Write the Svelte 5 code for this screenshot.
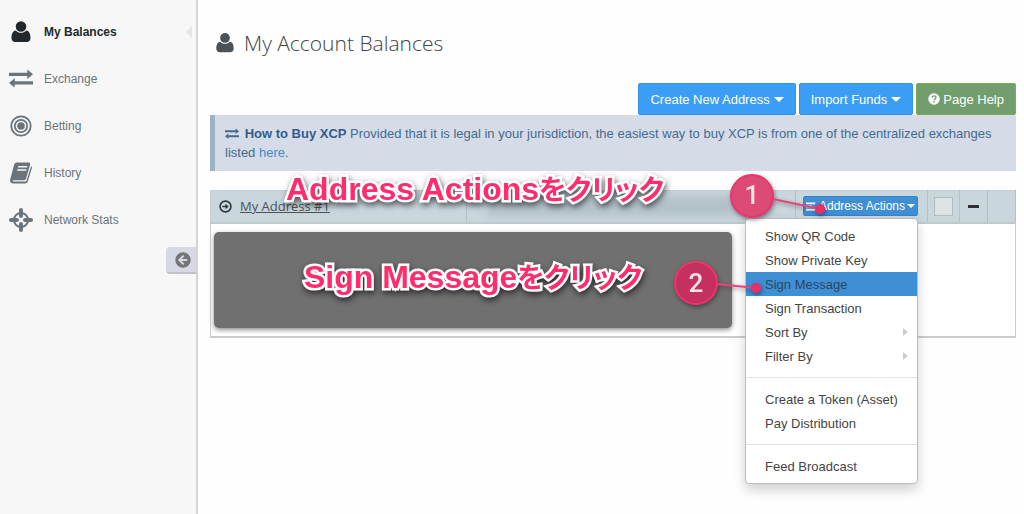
<script lang="ts">
  type NavItem = { label: string; icon: string; active?: boolean };

  const nav: NavItem[] = [
    { label: "My Balances", icon: "user", active: true },
    { label: "Exchange", icon: "exchange" },
    { label: "Betting", icon: "target" },
    { label: "History", icon: "book" },
    { label: "Network Stats", icon: "crosshairs" },
  ];

  const menu: { label: string; sub?: boolean }[][] = [
    [
      { label: "Show QR Code" },
      { label: "Show Private Key" },
      { label: "Sign Message" },
      { label: "Sign Transaction" },
      { label: "Sort By", sub: true },
      { label: "Filter By", sub: true },
    ],
    [{ label: "Create a Token (Asset)" }, { label: "Pay Distribution" }],
    [{ label: "Feed Broadcast" }],
  ];

  let selected = $state("Sign Message");
  let open = $state(true);
  let checked = $state(false);
</script>

{#snippet icon(name: string)}
  <svg class="icon" viewBox="0 0 24 24" fill="currentColor" aria-hidden="true">
    {#if name === "user"}
      <path d="M6.800 10.500C3.600 10.900 2.500 14 2.500 18 2.500 20.600 4.200 22 6.300 22h11.400c2.100 0 3.800-1.400 3.800-4 0-4-1.100-7.100-4.300-7.500-1.300 1.500-3.100 2.300-5.200 2.300s-3.900-.8-5.200-2.300z" />
      <circle cx="12" cy="6.500" r="5.300" />
    {:else if name === "exchange"}
      <path d="M0 5.700h18.300V2.600l5.700 4.700-5.700 4.700V9H0zM24 14.300H5.700v-3.100L0 15.900l5.700 4.700v-3.100H24z" />
    {:else if name === "target"}
      <g fill="none" stroke="currentColor" stroke-width="1.800">
        <circle cx="12" cy="12" r="9.700" />
        <circle cx="12" cy="12" r="6.200" />
      </g>
      <circle cx="12" cy="12" r="3.800" />
    {:else if name === "book"}
      <path d="M7.500 1.500h12.200c1.100 0 1.700.9 1.400 2l-4 14c-.4 1.200-1.200 1.800-2.300 1.800H4.500c-1 0-1.300 1.300.1 1.300h11.300c.8 0 1.400-.4 1.700-1.200L22 5.300c.9.500 1 1.200.8 2l-4 13.300c-.3 1.200-1.400 1.900-2.500 1.900H4.400c-1.800 0-3.400-1.300-3.400-3.100 0-.8.200-1.400.5-2.200L5 4.300C5.400 2.600 6.200 1.500 7.500 1.500z" />
      <path d="M9.200 5.700h9M8.300 9h9" stroke="#f7f7f7" stroke-width="1.500" />
    {:else if name === "crosshairs"}
      <circle cx="12" cy="12" r="7" fill="none" stroke="currentColor" stroke-width="2" />
      <path d="M12 2v6M12 16v6M2 12h6M16 12h6" stroke="currentColor" stroke-width="4" stroke-linecap="round" />
    {:else if name === "arrow-left"}
      <circle cx="12" cy="12" r="11.500" />
      <path d="M13 5.500 6.500 12l6.500 6.500M7 12h11.500" fill="none" stroke="#d6d9e4" stroke-width="3" />
    {:else if name === "arrow-right"}
      <circle cx="12" cy="12" r="10" fill="none" stroke="currentColor" stroke-width="3" />
      <path d="M6 10.500h6V6.700l6 5.300-6 5.300v-3.800H6z" />
    {:else if name === "help"}
      <circle cx="12" cy="12" r="11.500" />
      <path d="M8.200 9.300c.2-2.400 1.700-3.600 3.900-3.600 2.300 0 3.900 1.300 3.900 3.300 0 2.600-3.700 2.700-3.700 5.400M12.200 16.200v3" fill="none" stroke="#719e6c" stroke-width="2.800" />
    {:else if name === "align"}
      <path d="M0 3h20v4H0zM0 10h13v4H0zM0 17h24v4H0z" />
    {/if}
  </svg>
{/snippet}

<div class="page">
  <aside>
    <nav>
      {#each nav as item}
        <a href="#{item.icon}" class:active={item.active}>
          {@render icon(item.icon)}
          <span>{item.label}</span>
        </a>
      {/each}
    </nav>
    <button class="collapse" aria-label="Collapse sidebar">
      {@render icon("arrow-left")}
    </button>
  </aside>

  <main>
    <h1>{@render icon("user")}My Account Balances</h1>

    <div class="toolbar">
      <button class="btn">Create New Address<i class="caret"></i></button>
      <button class="btn">Import Funds<i class="caret"></i></button>
      <button class="btn help">{@render icon("help")}Page Help</button>
    </div>

    <p class="alert">
      {@render icon("exchange")}
      <strong>How to Buy XCP</strong> Provided that it is legal in your jurisdiction,
      the easiest way to buy XCP is from one of the centralized exchanges listed
      <a href="#buy">here</a>.
    </p>

    <div class="account">
      <table>
        <thead>
          <tr>
            <th class="name">
              <div class="address">
                {@render icon("arrow-right")}
                <a href="#address">My Address #1</a>
              </div>
            </th>
            <th class="hash"><div class="smudge"></div></th>
            <th class="actions">
              <div class="dropdown">
                <button class="btn small" aria-expanded={open} onclick={() => (open = !open)}>
                  {@render icon("align")}Address Actions<i class="caret"></i>
                </button>
                {#if open}
                  <ul class="menu">
                    {#each menu as group, i}
                      {#if i > 0}<li class="divider"></li>{/if}
                      {#each group as entry}
                        <li>
                          <button
                            class:selected={entry.label === selected}
                            onclick={() => (selected = entry.label)}
                          >
                            {entry.label}
                            {#if entry.sub}<i class="more"></i>{/if}
                          </button>
                        </li>
                      {/each}
                    {/each}
                  </ul>
                {/if}
                <!-- Step markers, drawn relative to the button they point at -->
                <svg class="steps" viewBox="0 0 160 150" width="160" height="150">
                  <path d="M57 29 104 39M1 114 40 118" class="lead" />
                  <circle cx="104" cy="39" r="5" class="dot" />
                  <circle cx="40" cy="118" r="5" class="dot" />
                  <circle cx="36" cy="26" r="21" class="badge" />
                  <circle cx="-20" cy="113" r="21" class="badge dark" />
                  <text x="36" y="34">1</text>
                  <text x="-20" y="122">2</text>
                </svg>
              </div>
            </th>
            <th class="tick">
              <input type="checkbox" aria-label="Select address" bind:checked />
            </th>
            <th class="fold"><button aria-label="Collapse address"></button></th>
            <th class="end"></th>
          </tr>
        </thead>
        <tbody>
          <tr>
            <td colspan="6">
              <div class="cover">
                <span class="note">Sign Message<span lang="ja">をクリック</span></span>
              </div>
            </td>
          </tr>
        </tbody>
      </table>
      <span class="note over">Address Actions<span lang="ja">をクリック</span></span>
    </div>
  </main>
</div>

<style>
  :global(body) {
    margin: 0;
    background: #fefefe;
  }
  .page {
    display: flex;
    min-height: 100vh;
    font-family: "Liberation Sans", Arial, sans-serif;
    font-size: 13px;
    color: #333;
  }
  button {
    font: inherit;
    cursor: pointer;
  }
  .icon {
    flex: none;
    width: 24px;
    height: 24px;
  }

  aside {
    display: flex;
    flex-direction: column;
    flex: none;
    box-sizing: border-box;
    width: 198px;
    padding-top: 8px;
    background: #f7f7f7;
    border-right: 2px solid #d4d4d4;
  }
  nav a {
    position: relative;
    display: flex;
    align-items: center;
    gap: 11px;
    height: 47px;
    padding-left: 9px;
    font-size: 12px;
    color: #6b747a;
    text-decoration: none;
  }
  nav a.active {
    font-weight: bold;
    color: #22282c;
  }
  nav a.active::after {
    content: "";
    position: absolute;
    right: 4px;
    border: 6px solid transparent;
    border-left: 0;
    border-right-color: #e6e6e6;
  }
  .collapse {
    display: flex;
    align-items: center;
    align-self: flex-end;
    width: 30px;
    height: 27px;
    margin-top: 4px;
    padding: 0 0 0 9px;
    border: 0;
    border-bottom: 2px solid #c0c1c6;
    border-radius: 4px 0 0 4px;
    background: #d6d9e4;
    color: #757575;
  }
  .collapse .icon {
    width: 16px;
    height: 16px;
  }

  main {
    flex: 1;
    min-width: 0;
    padding: 29px 8px 20px 12px;
  }
  h1 {
    display: flex;
    align-items: center;
    gap: 8px;
    margin: 0 0 26px 4px;
    font: 300 21px/28px "Open Sans", sans-serif;
    color: #444;
  }
  h1 .icon {
    width: 22px;
    height: 22px;
    color: #4d5256;
  }
  .toolbar {
    display: flex;
    justify-content: flex-end;
    gap: 3px;
  }
  .btn {
    display: flex;
    align-items: center;
    justify-content: center;
    gap: 4px;
    height: 32px;
    padding: 0 11px;
    border: 1px solid #3292ea;
    border-radius: 2px;
    background: #3b9ef5;
    color: #fff;
    white-space: nowrap;
  }
  .btn.help {
    gap: 3px;
    border-color: #7fa84f;
    background: #719e6c;
  }
  .btn.help .icon {
    width: 12px;
    height: 12px;
  }
  .caret {
    border: 4px solid transparent;
    border-top-color: currentColor;
    border-bottom: 0;
  }
  .toolbar .caret {
    border-width: 5px;
    border-bottom: 0;
  }
  .alert {
    margin: 0 0 19px;
    padding: 9px 10px;
    border-left: 5px solid #9bb3c4;
    background: #d6dce7;
    line-height: 19px;
    color: #456a90;
  }
  .alert .icon {
    width: 14px;
    height: 14px;
    margin-right: 2px;
    vertical-align: -3px;
  }
  .alert strong {
    color: #315d8e;
  }
  .alert a {
    color: #428bca;
    text-decoration: none;
  }

  .account {
    position: relative;
  }
  table {
    width: 100%;
    border: 1px solid #c8cccf;
    border-bottom-width: 2px;
    border-collapse: collapse;
    table-layout: fixed;
  }
  th {
    box-sizing: border-box;
    height: 32px;
    padding: 0;
    border-right: 1px solid #b4c1c7;
    border-bottom: 2px solid #bfc9ce;
    background: #c9d6dc;
    font-weight: normal;
  }
  .name {
    width: 256px;
  }
  .actions {
    width: 132px;
  }
  .tick {
    width: 32px;
  }
  .fold {
    width: 28px;
  }
  .end {
    width: 28px;
  }
  .address {
    display: flex;
    align-items: center;
    gap: 8px;
    padding-left: 8px;
  }
  .address .icon {
    width: 13px;
    height: 13px;
    color: #2f383d;
  }
  .address a {
    font: 13px/20px "Open Sans", sans-serif;
    color: #4a5358;
  }
  .smudge {
    height: 20px;
    margin: 0 24px 0 20px;
    background: #b3c2c8;
    filter: blur(4px);
  }
  .dropdown {
    position: relative;
    margin: 0 9px 0 7px;
  }
  .btn.small {
    width: 100%;
    height: 20px;
    gap: 2px;
    padding: 0;
    border-color: #3583c9;
    background: #3f8fd5;
    font-size: 12px;
  }
  .btn.small .icon {
    width: 11px;
    height: 11px;
  }
  .menu {
    position: absolute;
    z-index: 2;
    top: 100%;
    right: 0;
    box-sizing: border-box;
    width: 173px;
    margin: 2px 0 0;
    padding: 5px 0;
    border: 1px solid #bcbcbc;
    border-radius: 4px;
    background: #fff;
    box-shadow: 0 6px 12px rgba(0, 0, 0, 0.18);
    list-style: none;
  }
  .menu button {
    display: flex;
    align-items: center;
    justify-content: space-between;
    width: 100%;
    height: 24px;
    padding: 0 9px 0 19px;
    border: 0;
    background: none;
    color: #444;
    white-space: nowrap;
  }
  .menu button.selected {
    background: #3f8fd5;
    color: #2c4660;
  }
  .divider {
    height: 1px;
    margin: 9px 0;
    background: #e2e2e2;
  }
  .more {
    border: 4px solid transparent;
    border-left: 5px solid #ccc;
    border-right: 0;
  }
  .tick input {
    display: block;
    box-sizing: border-box;
    width: 19px;
    height: 19px;
    margin: 0 auto;
    appearance: none;
    border: 1px solid #aebbc0;
    background: #dae3e6;
  }
  .fold button {
    display: block;
    width: 11px;
    height: 3px;
    margin: 0 auto;
    padding: 0;
    border: 0;
    background: #2b2f31;
  }
  td {
    padding: 8px 0 8px 3px;
    background: #fff;
  }
  .cover {
    display: flex;
    align-items: center;
    justify-content: center;
    height: 96px;
    margin-right: 283px;
    border-radius: 5px;
    background: #707070;
    box-shadow: 0 2px 5px rgba(0, 0, 0, 0.45);
  }

  .note {
    font: bold 32px/40px "Liberation Sans", "Noto Sans CJK JP", sans-serif;
    color: #ff2d6b;
    white-space: nowrap;
    -webkit-text-stroke: 5px #fff;
    paint-order: stroke fill;
    filter: drop-shadow(1px 3px 3px rgba(0, 0, 0, 0.6));
  }
  .note span {
    font-size: 28px;
    font-feature-settings: "palt";
  }
  .cover .note {
    padding-bottom: 4px;
  }
  .note.over {
    position: absolute;
    top: -21px;
    left: 76px;
  }
  .steps {
    position: absolute;
    z-index: 3;
    top: -26px;
    left: -87px;
    overflow: visible;
    pointer-events: none;
    filter: drop-shadow(1px 2px 2px rgba(0, 0, 0, 0.4));
  }
  .lead {
    fill: none;
    stroke: #ec4379;
    stroke-width: 2;
  }
  .dot {
    fill: #e6306c;
  }
  .badge {
    fill: #dc4a76;
    stroke: #f0336d;
    stroke-width: 2;
  }
  .badge.dark {
    fill: #c4305f;
  }
  .steps text {
    fill: #fbe3ea;
    font: 500 26px Roboto, sans-serif;
    text-anchor: middle;
  }
</style>
